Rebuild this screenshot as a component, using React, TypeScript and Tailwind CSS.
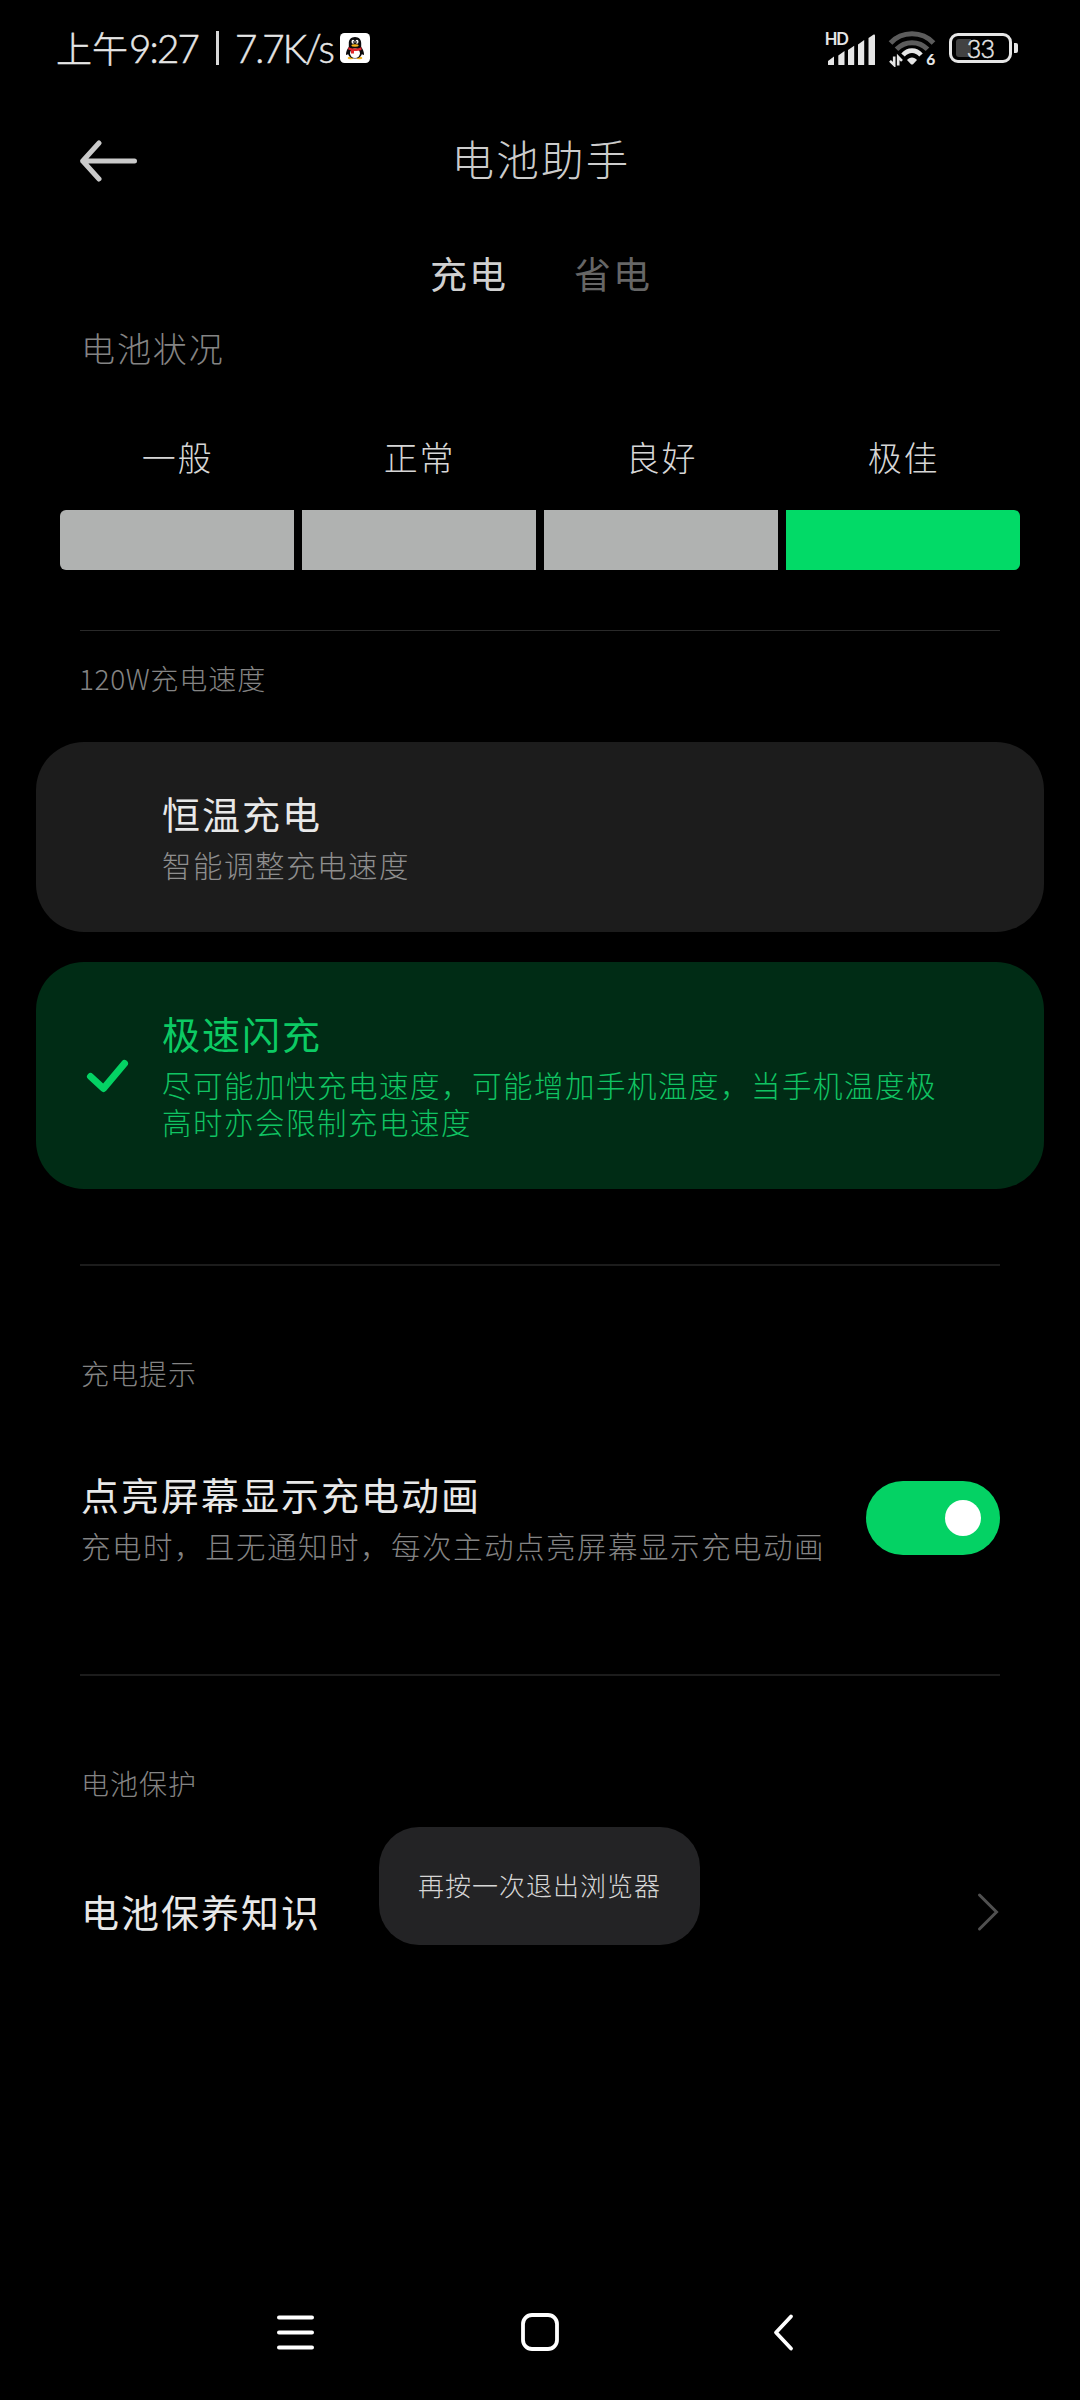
const LEVELS = [
  { label: '一般', bar: 'rounded-l-[6px] bg-[#b0b2b1]' },
  { label: '正常', bar: 'bg-[#b0b2b1]' },
  { label: '良好', bar: 'bg-[#b0b2b1]' },
  { label: '极佳', bar: 'rounded-r-[6px] bg-[#02da67]' },
];

function QQIcon() {
  return (
    <svg width="30" height="30" viewBox="0 0 30 30">
      <rect width="30" height="30" rx="4.5" fill="#fff" />
      <ellipse cx="10.6" cy="25" rx="3" ry="1.3" fill="#f5b21c" />
      <ellipse cx="19.4" cy="25" rx="3" ry="1.3" fill="#f5b21c" />
      <path
        d="M15 4C11 4 8.8 6.8 8.8 10.2V14C7.4 16 6 18.6 6 21C6 22.6 7 22.3 8 21C9 24 11.8 25.5 15 25.5S21 24 22 21C23 22.3 24 22.6 24 21C24 18.6 22.6 16 21.2 14V10.2C21.2 6.8 19 4 15 4Z"
        fill="#0b0b0d"
      />
      <ellipse cx="15" cy="20.3" rx="5" ry="4.8" fill="#fff" />
      <ellipse cx="13" cy="8.8" rx="1.5" ry="2" fill="#fff" />
      <ellipse cx="17" cy="8.8" rx="1.5" ry="2" fill="#fff" />
      <circle cx="13.5" cy="9" r=".7" fill="#111" />
      <circle cx="16.5" cy="9" r=".7" fill="#111" />
      <ellipse cx="15" cy="12.5" rx="3.6" ry="1.2" fill="#f5b21c" />
      <path d="M8.5 14C12 16 18 16 21.5 14V17C18.5 18 16 18.1 14 18V20.5H11V17.5L8.2 16.5Z" fill="#e0262b" />
    </svg>
  );
}

function SignalIcon() {
  return (
    <svg width="52" height="36" viewBox="0 0 52 36" fill="#e6e6e6">
      <text x="-0.3" y="15" fontFamily="Lato" fontWeight="700" fontSize="16.5" textLength="24">
        HD
      </text>
      <path d="M3 34.5V31L9 26.5V34.5Q9 35 8.5 35H3.5Q3 35 3 34.5Z" />
      <path d="M13.3 34.5V25.5L19.5 21V34.5Q19.5 35 19 35H13.8Q13.3 35 13.3 34.5Z" />
      <path d="M23 34.5V20L29.2 15.8V34.5Q29.2 35 28.7 35H23.5Q23 35 23 34.5Z" />
      <path d="M33 34.5V14.5L39.2 10V34.5Q39.2 35 38.7 35H33.5Q33 35 33 34.5Z" />
      <path d="M43.5 34.5V8L48.7 4.5Q50 4 50 5.5V34.5Q50 35 49.5 35H44Q43.5 35 43.5 34.5Z" />
    </svg>
  );
}

function WifiIcon() {
  return (
    <svg width="48" height="38" viewBox="0 0 48 38" fill="none">
      <path d="M2.5 14C14 1.7 34 1.7 45.5 14" stroke="#5c5c5c" strokeWidth="5" />
      <path d="M8.5 20.3C17 11.5 31 11.5 39.5 20.3" stroke="#5c5c5c" strokeWidth="5" />
      <path d="M15 26C20 20.2 28 20.2 33 26" stroke="#e6e6e6" strokeWidth="4.6" />
      <path d="M19 31C21.5 27.6 26.5 27.6 29 31L25 35.2Q24 36 23 35.2Z" fill="#e6e6e6" />
      <path d="M6.2 27.5V36L2 31.8M10.2 36.5V28L14 31.8" stroke="#e6e6e6" strokeWidth="2.6" />
      <text x="38.3" y="36" fill="#e6e6e6" fontFamily="Lato" fontWeight="900" fontSize="15.5">
        6
      </text>
    </svg>
  );
}

function BatteryIcon() {
  return (
    <div className="flex items-center gap-[2px]">
      <div className="relative flex h-[30px] w-[63px] items-center justify-center rounded-[9px] border-3 border-[#e6e6e6]">
        <div className="absolute top-[3px] left-[4px] h-[18px] w-[15px] rounded-l-[3px] bg-[#424242]" />
        <span className="relative font-['Lato'] text-[25px] leading-none font-light tracking-[-0.8px] text-[#e6e6e6] [-webkit-text-stroke:0.5px_#e6e6e6]">33</span>
      </div>
      <div className="h-[10px] w-[4px] rounded-r-[2px] bg-[#e6e6e6]" />
    </div>
  );
}

function StatusBar() {
  return (
    <div className="flex h-24 items-center justify-between pr-[62px] pl-[56px]">
      <div className="flex items-center text-[#e6e6e6]">
        <span className="w-[73px] pb-[3px] text-[36px] leading-[44px] font-light [-webkit-text-stroke:0.4px_#e6e6e6]">上午</span>
        <div className="flex items-center font-['Lato'] text-[38.5px] leading-[44px] font-light [-webkit-text-stroke:0.5px_#e6e6e6]">
          <span className="w-[87px] tracking-[-1.8px]">9:27</span>
          <span className="h-[34px] w-[3px] bg-[#d8d8d8]" />
          <span className="ml-[16px] w-[105px] tracking-[-2px]">7.7K/s</span>
        </div>
        <QQIcon />
      </div>
      <div className="flex items-center">
        <SignalIcon />
        <span className="ml-[11px]">
          <WifiIcon />
        </span>
        <span className="ml-[13px]">
          <BatteryIcon />
        </span>
      </div>
    </div>
  );
}

function Header() {
  return (
    <div className="grid h-32 grid-cols-[1fr_auto_1fr] items-center px-20">
      <svg className="mt-px" width="58" height="42" viewBox="0 0 58 42" fill="none" stroke="#cacaca" strokeWidth="5" strokeLinecap="round" strokeLinejoin="round">
        <path d="M19 3L2.7 21L19 39M2.7 21H54.5" />
      </svg>
      <h1 className="pb-1 pl-[2px] text-[42.5px] leading-[56px] font-light tracking-[2.3px] text-[#cccccc]">电池助手</h1>
    </div>
  );
}

function Option({ title, desc, checked }: { title: string; desc: string; checked?: boolean }) {
  return (
    <div className={`flex rounded-[48px] pt-[44px] pr-[89px] pb-[49px] ${checked ? 'bg-[#002c15]' : 'bg-[#1c1c1c]'}`}>
      <div className="flex w-[126px] shrink-0 items-center pl-[50px]">
        {checked && (
          <svg className="mt-[6px]" width="43" height="36" viewBox="0 0 43 36" fill="none" stroke="#04d264" strokeWidth="7" strokeLinecap="round" strokeLinejoin="round">
            <path d="M4.5 18.5L17.5 30.5L38.5 5.5" />
          </svg>
        )}
      </div>
      <div>
        <div className={`text-[38px] leading-[54px] tracking-[2px] ${checked ? 'text-[#0ccb64]' : 'text-[#e8e8e8]'}`}>{title}</div>
        <div className={`mt-[6px] text-[29.5px] leading-[37px] font-light tracking-[1.5px] ${checked ? 'text-[#10c463]' : 'text-[#8e8e8e]'}`}>{desc}</div>
      </div>
    </div>
  );
}

function SectionLabel({ prefix, children }: { prefix?: string; children: string }) {
  return (
    <div className="translate-y-px px-[81px] text-[28px] leading-[40px] font-light tracking-[1px] text-[#848484]">
      {prefix && <span className="-ml-[2px] tracking-[0.6px]">{prefix}</span>}
      {children}
    </div>
  );
}

function NavBar() {
  return (
    <div className="mt-auto flex h-[136px] items-center pl-[275px]">
      <svg width="41" height="40" viewBox="0 0 41 40" stroke="#fff" strokeWidth="4" strokeLinecap="round">
        <path d="M4 5.5H37M4 20.5H37M4 35.5H37" />
      </svg>
      <svg className="ml-[205px]" width="38" height="38" viewBox="0 0 38 38" fill="none" stroke="#fff" strokeWidth="3.8">
        <rect x="2" y="2" width="34" height="34" rx="9" />
      </svg>
      <svg className="ml-[213px]" width="22" height="40" viewBox="0 0 22 40" fill="none" stroke="#fff" strokeWidth="3.8" strokeLinecap="round" strokeLinejoin="round">
        <path d="M19 4.5L4 20.5L19 36.5" />
      </svg>
    </div>
  );
}

export default function App() {
  return (
    <div className="relative flex h-[2400px] w-[1080px] flex-col overflow-hidden bg-black font-['Noto_Sans_CJK_SC',sans-serif]">
      <StatusBar />
      <Header />
      <div className="flex h-[100px] items-center justify-center gap-[66px] pl-[2px] text-[37px] tracking-[2px]">
        <span className="text-[#d0d0d0]">充电</span>
        <span className="text-[#666666]">省电</span>
      </div>

      <div className="px-[81px] text-[34px] leading-[48px] font-light tracking-[1.9px] text-[#848484]">电池状况</div>
      <div className="mt-[61px] grid grid-cols-4 gap-2 px-[60px]">
        {LEVELS.map((level) => (
          <div key={level.label}>
            <div className="pl-px text-center text-[34px] leading-[48px] font-light tracking-[1.7px] text-[#d6d6d6]">{level.label}</div>
            <div className={`mt-[29px] h-[60px] ${level.bar}`} />
          </div>
        ))}
      </div>

      <div className="mx-20 mt-[60px] mb-[26px] h-px shrink-0 bg-[#292929]" />
      <SectionLabel prefix="120W">充电速度</SectionLabel>
      <div className="mx-9 mt-[45px] flex flex-col gap-[30px]">
        <Option title="恒温充电" desc="智能调整充电速度" />
        <Option title="极速闪充" desc="尽可能加快充电速度，可能增加手机温度，当手机温度极高时亦会限制充电速度" checked />
      </div>

      <div className="mx-20 mt-[75px] mb-[86px] h-[2px] shrink-0 bg-[#1c1c1c]" />
      <SectionLabel>充电提示</SectionLabel>
      <div className="mt-[75px] flex items-center justify-between pr-20 pl-[81px]">
        <div>
          <div className="text-[38px] leading-[54px] tracking-[2px] text-[#e8e8e8]">点亮屏幕显示充电动画</div>
          <div className="mt-[6px] text-[29.5px] leading-[37px] font-light tracking-[1.5px] text-[#848484]">充电时，且无通知时，每次主动点亮屏幕显示充电动画</div>
        </div>
        <div className="mt-[5px] flex h-[74px] w-[134px] shrink-0 items-center justify-end rounded-full bg-[#04d264] pr-[19px]">
          <div className="size-9 rounded-full bg-white" />
        </div>
      </div>

      <div className="mx-20 mt-[110px] mb-[86px] h-[2px] shrink-0 bg-[#1c1c1c]" />
      <SectionLabel>电池保护</SectionLabel>
      <div className="mt-[82px] flex items-center justify-between pr-20 pl-[81px]">
        <div className="text-[38px] leading-[54px] tracking-[2px] text-[#e8e8e8]">电池保养知识</div>
        <svg className="mt-[2px]" width="24" height="40" viewBox="0 0 24 40" fill="none" stroke="#505050" strokeWidth="3" strokeLinecap="round">
          <path d="M3.5 3L20.5 20L3.5 37" />
        </svg>
      </div>

      <div className="absolute top-[1827px] left-[379px] flex h-[118px] w-[321px] items-center justify-center rounded-[40px] bg-[#232325] pb-1 text-[26px] font-light tracking-[1px] text-[#d6d6d6]">
        再按一次退出浏览器
      </div>
      <NavBar />
    </div>
  );
}
